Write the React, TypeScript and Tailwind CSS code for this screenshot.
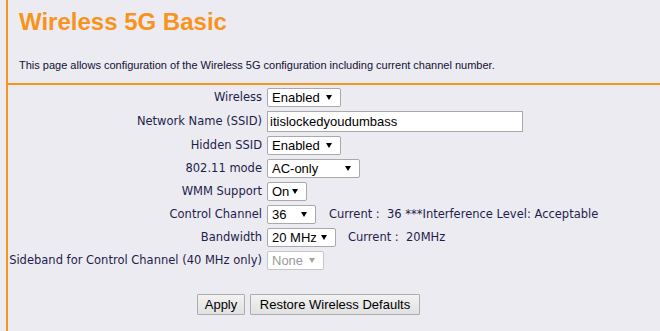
import React from "react";

const Arrow = ({ disabled }: { disabled?: boolean }) => (
  <svg width="6" height="5" viewBox="0 0 6 5" className="shrink-0">
    <path d="M0 0 H6 L3 5 Z" fill={disabled ? "#a3a3a3" : "#000"} />
  </svg>
);

const Sel = ({ value, w, disabled }: { value: string; w: string; disabled?: boolean }) => (
  <div
    className={`${w} h-[19px] flex items-center justify-between pl-[4px] pr-[8px] bg-white border rounded-[2px] text-[13px] leading-none ${
      disabled ? "border-[#c6c6c6] text-[#9a9a9a]" : "border-[#a9a9a9] text-black"
    }`}
    style={{ fontFamily: '"Liberation Sans", Arial, sans-serif' }}
  >
    <span>{value}</span>
    <Arrow disabled={disabled} />
  </div>
);

const Row = ({ label, children }: { label: string; children: React.ReactNode }) => (
  <div className="flex items-center">
    <div className="w-[254px] shrink-0 text-right whitespace-nowrap">{label}</div>
    <div className="ml-[5px] flex items-center">{children}</div>
  </div>
);

export default function App() {
  return (
    <div className="w-[660px] h-[331px] bg-[#ecebf1] overflow-hidden">
      <div className="ml-[6px] h-full border-l-2 border-[#f7941d] flex flex-col">
        <div className="pl-[11px]">
          <div
            className="mt-[8px] text-[24px] leading-[28px] font-bold text-[#f7941d]"
            style={{ fontFamily: '"Liberation Sans", Arial, sans-serif' }}
          >
            Wireless 5G Basic
          </div>
          <div
            className="mt-[23px] text-[11px] leading-[13px] text-[#111133]"
            style={{ fontFamily: '"Liberation Sans", Arial, sans-serif' }}
          >
            This page allows configuration of the Wireless 5G configuration including current channel number.
          </div>
        </div>
        <div className="mt-[11px] h-[2px] bg-[#f7941d]" />
        <div
          className="pt-[3px] flex flex-col gap-[4px] text-[11.5px] text-[#1e1e4c]"
          style={{ fontFamily: '"DejaVu Sans", Verdana, sans-serif' }}
        >
          <Row label="Wireless">
            <Sel value="Enabled" w="w-[74px]" />
          </Row>
          <Row label="Network Name (SSID)">
            <div
              className="w-[256px] h-[21px] bg-white border border-[#a9a9a9] flex items-center pl-[2px] text-[13px] text-black"
              style={{ fontFamily: '"Liberation Sans", Arial, sans-serif' }}
            >
              itislockedyoudumbass
            </div>
          </Row>
          <Row label="Hidden SSID">
            <Sel value="Enabled" w="w-[74px]" />
          </Row>
          <Row label="802.11 mode">
            <Sel value="AC-only" w="w-[93px]" />
          </Row>
          <Row label="WMM Support">
            <Sel value="On" w="w-[40px]" />
          </Row>
          <Row label="Control Channel">
            <Sel value="36" w="w-[49px]" />
            <span className="ml-[13px] whitespace-pre">Current :  36 ***Interference Level: Acceptable</span>
          </Row>
          <Row label="Bandwidth">
            <Sel value="20 MHz" w="w-[69px]" />
            <span className="ml-[12px] whitespace-pre">Current :  20MHz</span>
          </Row>
          <Row label="Sideband for Control Channel (40 MHz only)">
            <Sel value="None" w="w-[57px]" disabled />
          </Row>
        </div>
        <div
          className="mt-[24px] pl-[189px] flex gap-[5px] text-[13px] text-black"
          style={{ fontFamily: '"Liberation Sans", Arial, sans-serif' }}
        >
          <div className="h-[21px] w-[48px] flex items-center justify-center border border-[#adadad] bg-gradient-to-b from-[#f2f2f2] to-[#e1e1e1] rounded-[1px]">
            Apply
          </div>
          <div className="h-[21px] w-[170px] flex items-center justify-center border border-[#adadad] bg-gradient-to-b from-[#f2f2f2] to-[#e1e1e1] rounded-[1px]">
            Restore Wireless Defaults
          </div>
        </div>
      </div>
    </div>
  );
}
